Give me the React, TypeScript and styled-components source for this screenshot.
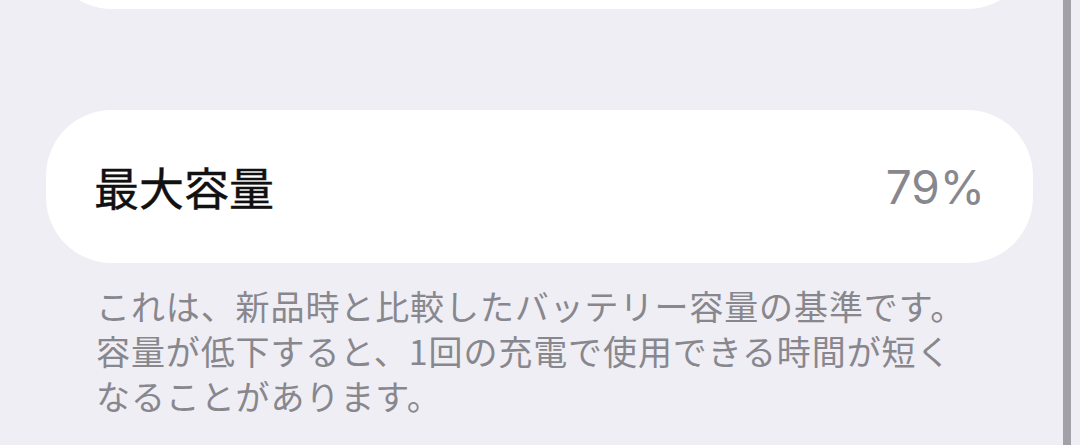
import React from 'react';
import styled, { createGlobalStyle } from 'styled-components';

const colors = {
    background: '#efeef4',
    card: '#ffffff',
    label: '#111111',
    secondary: '#88878d',
    rail: '#a2a1a7',
};

const GlobalStyle = createGlobalStyle`
  html, body {
    margin: 0;
    padding: 0;
    background: ${colors.background};
  }
  body {
    font-family: "Noto Sans CJK JP", "Noto Sans", sans-serif;
    -webkit-font-smoothing: antialiased;
  }
`;

const Page = styled.div`
  display: flex;
  height: 445px;
  overflow: hidden;
  padding-left: 46px;
  background: ${colors.background};
  box-sizing: border-box;
`;

const Content = styled.div`
  width: 987px;
  display: flex;
  flex-direction: column;
`;

const Card = styled.div<{ clipped?: boolean }>`
  height: 153px;
  background: ${colors.card};
  border-radius: 66px;
  display: flex;
  align-items: center;
  justify-content: space-between;
  padding: 0 48px 0 48px;
  box-sizing: border-box;
  margin-top: ${(props) => (props.clipped ? '-144px' : '101px')};
`;

const Label = styled.span`
  font-size: 45px;
  font-weight: 400;
  color: ${colors.label};
  -webkit-text-stroke: 0.4px ${colors.label};
`;

const Value = styled.span`
  font-family: Inter, "Noto Sans", sans-serif;
  font-size: 46px;
  font-weight: 400;
  color: ${colors.secondary};
`;

const Footnote = styled.p`
  margin: 20px 0 0;
  padding-left: 50px;
  font-size: 34px;
  line-height: 45px;
  letter-spacing: 0.9px;
  color: ${colors.secondary};
  white-space: nowrap;
`;

const Rail = styled.div`
  width: 8px;
  margin-left: 30px;
  background: ${colors.rail};
  box-shadow: -6px 0 0 -5px #e6e5eb;
`;

export default function App() {
    return (
        <>
            <GlobalStyle />
            <Page>
                <Content>
                    <Card clipped />
                    <Card>
                        <Label>最大容量</Label>
                        <Value>79%</Value>
                    </Card>
                    <Footnote>
                        これは、新品時と比較したバッテリー容量の基準です。
                        <br />
                        容量が低下すると、1回の充電で使用できる時間が短く
                        <br />
                        なることがあります。
                    </Footnote>
                </Content>
                <Rail />
            </Page>
        </>
    );
}
